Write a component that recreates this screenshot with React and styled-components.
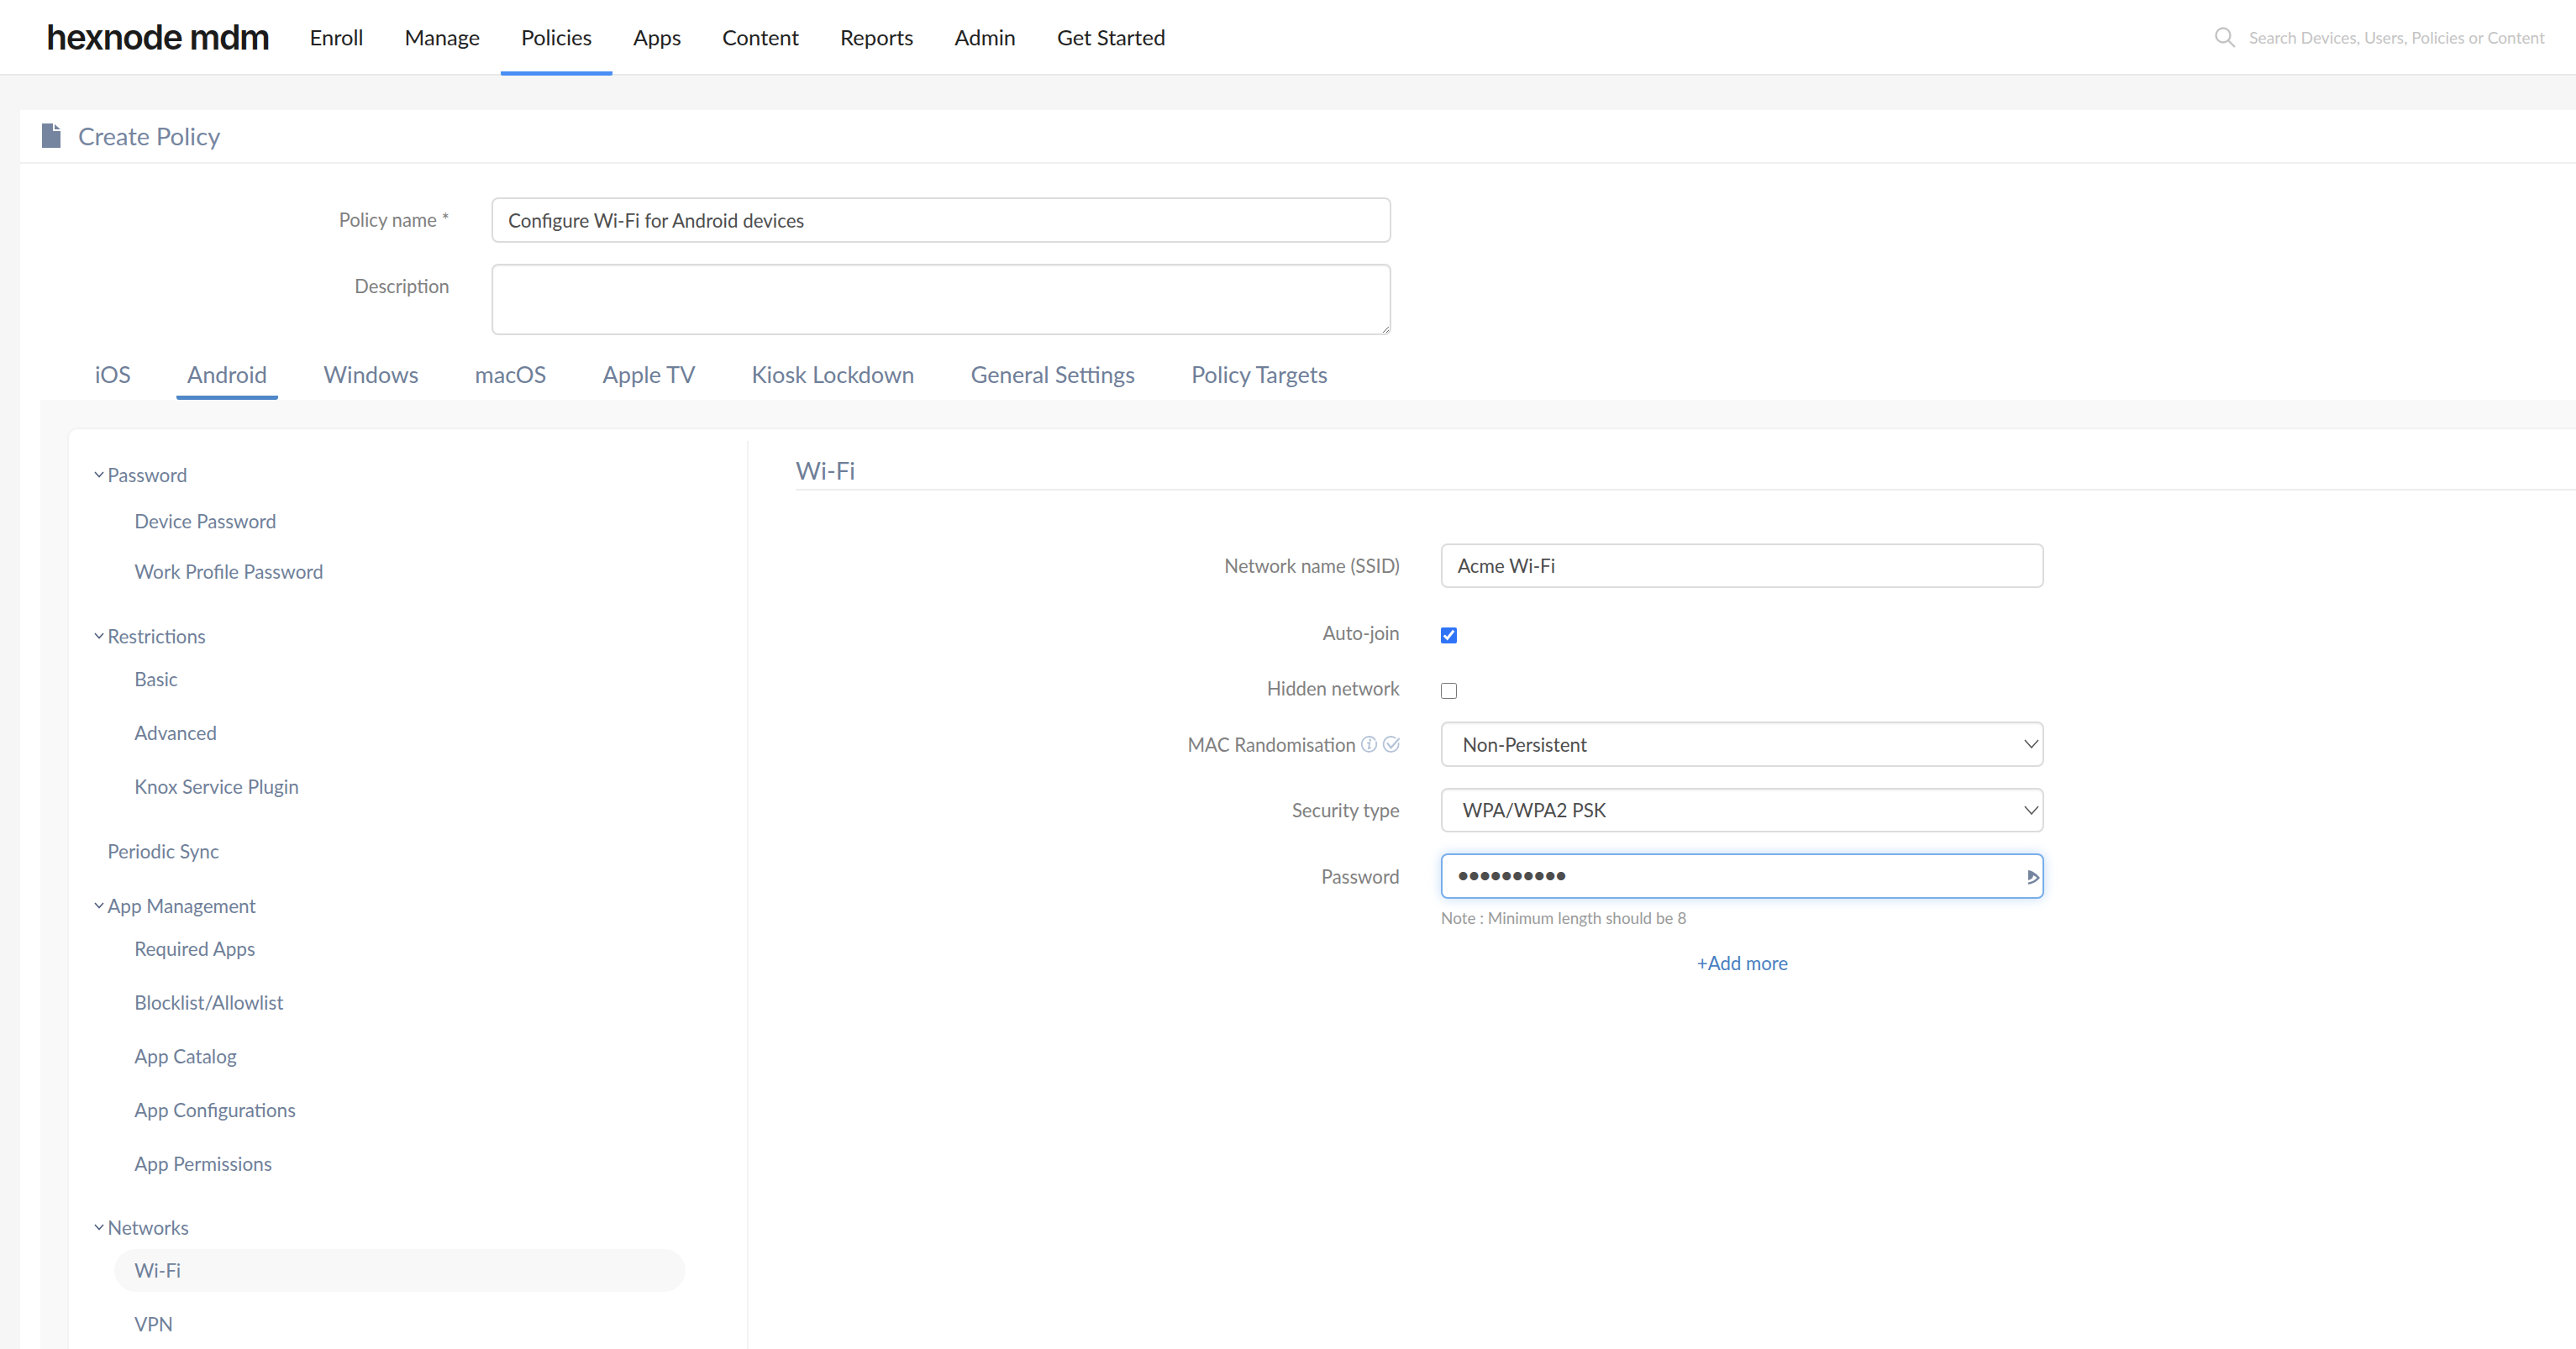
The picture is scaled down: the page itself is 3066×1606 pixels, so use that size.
import React from "react";
import styled, { createGlobalStyle } from "styled-components";

const Global = createGlobalStyle`
  html, body { margin: 0; padding: 0; background: #f6f6f6; }
  body { width: 3066px; height: 1606px; overflow: hidden; font-family: Lato, "Liberation Sans", sans-serif; }
  * { box-sizing: border-box; }
`;

const Page = styled.div`width: 3066px; height: 1606px; overflow: hidden; background: #f6f6f6;`;

const Header = styled.header`
  display: flex; align-items: stretch; height: 90px; background: #fff;
  border-bottom: 2px solid #e9e9e9; padding-left: 55px;
`;
const Logo = styled.div`
  font-family: Inter, sans-serif; font-weight: 600; font-size: 41px; letter-spacing: -1.45px;
  color: #1b1b1b; width: 289px; line-height: 88px; white-space: nowrap;
`;
const Nav = styled.nav`display: flex;`;
const NavLink = styled.a`
  display: flex; align-items: center; padding: 2px 24.5px 0; height: 90px;
  font-size: 25.6px; color: #222; border-bottom: 5px solid ${p => (p.$active ? "#4a8ef5" : "transparent")};
  border-radius: 0 0 2px 2px;
`;
const Search = styled.div`
  margin-left: auto; display: flex; align-items: center; gap: 16px; padding-right: 37px;
  font-size: 19.15px; color: #c4c4c4;
`;

const Card = styled.main`margin: 41px 0 0 24px; background: #fff; height: 1475px;`;
const CardTitle = styled.div`
  display: flex; align-items: center; gap: 21px; height: 64px; padding: 0 0 2px 26px;
  border-bottom: 2px solid #f0f0f0; font-size: 29.3px; color: #7686a0;
`;
const PolicyForm = styled.div`display: flex; flex-direction: column; gap: 25px; padding-top: 40px;`;
const PolicyRow = styled.div`display: grid; grid-template-columns: 511px 1071px; column-gap: 50px;`;
const PolicyLabel = styled.label`
  font-size: 22.2px; color: #808080; text-align: right; padding-top: 13px; line-height: 28px;
`;
const TextInput = styled.input`
  width: 100%; height: ${p => p.$h || 53}px; padding: 0 18px; border: 2px solid #dcdcdc; border-radius: 8px;
  font: 22.4px Lato, sans-serif; color: #4d4d4d; background: #fff; outline: none;
`;
const Area = styled.textarea`
  width: 100%; height: 85px; display: block; padding: 10px 18px; border: 2px solid #dcdcdc; border-radius: 8px;
  box-shadow: inset 0 1px 2px rgba(0,0,0,.07); font: 22.4px Lato, sans-serif; outline: none; background: #fff;
`;

const Tabs = styled.div`display: flex; gap: 41px; margin: 27px 0 0 76px; height: 50px;`;
const Tab = styled.a`
  padding: 0 13px 6px; height: 50px; display: flex; align-items: center; font-size: 27.2px; color: #6f7f99;
  border-bottom: 5px solid ${p => (p.$active ? "#4f87c7" : "transparent")}; border-radius: 0 0 3px 3px;
`;

const Panel = styled.section`margin-left: 24px; background: #f9f9f9; padding: 33px 0 0 32px; height: 1130px;`;
const Inner = styled.div`
  display: flex; background: #fff; height: 1100px; border: 2px solid #f3f3f3; border-right: 0; border-radius: 12px 0 0 0;
`;
const Sidebar = styled.aside`
  width: 809px; margin-top: 14px; padding: 20px 0 0 30px; border-right: 2px solid #f3f3f3; flex: none;
  display: flex; flex-direction: column;
`;
const Group = styled.div`
  display: flex; flex-direction: column; gap: ${p => p.$gap ?? 13}px; margin-top: ${p => p.$top ?? 31}px;
  &:first-child { margin-top: 0; }
`;
const GroupHead = styled.div`
  display: flex; align-items: center; height: 40px; margin-bottom: ${p => p.$mb ?? -7}px;
  font-size: 22.6px; color: #6f7f99; padding-left: ${p => (p.$plain ? 16 : 0)}px; gap: 4px;
`;
const SideItem = styled.a`
  display: flex; align-items: center; height: 51px; width: 680px; margin-left: 24px; padding-left: 24px;
  border-radius: 26px; font-size: 22.6px; color: #6f7f99; background: ${p => (p.$active ? "#f8f8f8" : "transparent")};
`;

const Content = styled.div`flex: 1; padding: 31px 0 0 56px;`;
const WifiTitle = styled.h2`
  margin: 0; padding-bottom: 5px; font-weight: 400; font-size: 29px; line-height: 35px; color: #6f7f99;
  border-bottom: 2px solid #eeeeee;
`;
const Form = styled.div`display: flex; flex-direction: column; padding-top: 63px;`;
const Row = styled.div`
  display: grid; grid-template-columns: 719px 718px; column-gap: 49px; align-items: center;
  margin-top: ${p => p.$top || 0}px; height: ${p => p.$h || 53}px;
`;
const Label = styled.label`
  display: flex; justify-content: flex-end; align-items: center; gap: 6px; font-size: 22.2px; color: #808080;
`;
const Check = styled.input`
  width: 19px; height: 19px; margin: 6px 0 0; accent-color: #2f74f6; display: block;
`;
const SelectWrap = styled.div`position: relative; height: 100%;`;
const Select = styled.select`
  appearance: none; width: 100%; height: 100%; padding: 0 40px 0 24px; border: 2px solid #dcdcdc; border-radius: 8px;
  box-shadow: inset 0 2px 2px rgba(0,0,0,.04); font: 22.4px Lato, sans-serif; color: #4d4d4d; background: #fff; outline: none;
`;
const Chevron = styled.svg`position: absolute; right: 6px; top: 21px; width: 18px; height: 11px;`;
const PwdWrap = styled.div`position: relative; height: 100%;`;
const PwdInput = styled(TextInput)`
  height: 54px; padding-left: 18px; border-color: #78aeea; box-shadow: 0 0 14px rgba(102,168,238,.4);
  font-size: 37px; font-family: "Liberation Sans", sans-serif;
`;
const Eye = styled.svg`position: absolute; right: 5px; top: 20px; width: 14px; height: 18px;`;
const Note = styled.div`grid-column: 2; font-size: 18.9px; color: #9a9a9a;`;
const AddMore = styled.a`grid-column: 2; text-align: center; font-size: 22.2px; color: #4a7fc1;`;

const Head = ({ children, mb, plain }) => (
  <GroupHead $mb={mb} $plain={plain}>
    {!plain && (
      <svg width="12" height="8" viewBox="0 0 12 8" fill="none" stroke="#4f5f7c" strokeWidth="1.6"><path d="M1 1l5 5.5L11 1" /></svg>
    )}
    {children}
  </GroupHead>
);

export default function App() {
  return (
    <Page>
      <Global />
      <Header>
        <Logo>hexnode mdm</Logo>
        <Nav>
          {["Enroll", "Manage", "Policies", "Apps", "Content", "Reports", "Admin", "Get Started"].map(t => (
            <NavLink key={t} $active={t === "Policies"}>{t}</NavLink>
          ))}
        </Nav>
        <Search>
          <svg width="25" height="25" viewBox="0 0 25 25" fill="none" stroke="#c4c4c4" strokeWidth="2.4">
            <circle cx="10" cy="10" r="8.5" /><path d="M16 16l8 8" />
          </svg>
          Search Devices, Users, Policies or Content
        </Search>
      </Header>
      <Card>
        <CardTitle>
          <svg width="22" height="29" viewBox="0 0 22 29" fill="#76859f">
            <path d="M0 0h13v9h9v20H0z" /><path d="M15 1l7 6h-7z" />
          </svg>
          Create Policy
        </CardTitle>
        <PolicyForm>
          <PolicyRow>
            <PolicyLabel>Policy name *</PolicyLabel>
            <TextInput $h={54} readOnly value="Configure Wi-Fi for Android devices" />
          </PolicyRow>
          <PolicyRow>
            <PolicyLabel>Description</PolicyLabel>
            <Area readOnly />
          </PolicyRow>
        </PolicyForm>
        <Tabs>
          {["iOS", "Android", "Windows", "macOS", "Apple TV", "Kiosk Lockdown", "General Settings", "Policy Targets"].map(t => (
            <Tab key={t} $active={t === "Android"}>{t}</Tab>
          ))}
        </Tabs>
        <Panel>
          <Inner>
            <Sidebar>
              <Group $gap={9}>
                <Head mb={1}>Password</Head>
                <SideItem>Device Password</SideItem>
                <SideItem>Work Profile Password</SideItem>
              </Group>
              <Group>
                <Head>Restrictions</Head>
                <SideItem>Basic</SideItem>
                <SideItem>Advanced</SideItem>
                <SideItem>Knox Service Plugin</SideItem>
              </Group>
              <Group><Head plain mb={0}>Periodic Sync</Head></Group>
              <Group $top={25}>
                <Head>App Management</Head>
                <SideItem>Required Apps</SideItem>
                <SideItem>Blocklist/Allowlist</SideItem>
                <SideItem>App Catalog</SideItem>
                <SideItem>App Configurations</SideItem>
                <SideItem>App Permissions</SideItem>
              </Group>
              <Group $top={30}>
                <Head>Networks</Head>
                <SideItem $active>Wi-Fi</SideItem>
                <SideItem>VPN</SideItem>
              </Group>
            </Sidebar>
            <Content>
              <WifiTitle>Wi-Fi</WifiTitle>
              <Form>
                <Row>
                  <Label>Network name (SSID)</Label>
                  <TextInput readOnly value="Acme Wi-Fi" />
                </Row>
                <Row $top={38} $h={30}>
                  <Label>Auto-join</Label>
                  <Check type="checkbox" defaultChecked />
                </Row>
                <Row $top={36} $h={30}>
                  <Label>Hidden network</Label>
                  <Check type="checkbox" />
                </Row>
                <Row $top={25} $h={54}>
                  <Label>
                    MAC Randomisation
                    <svg width="46" height="20" viewBox="0 0 46 20" fill="none" stroke="#b4c3d8" strokeWidth="1.8" strokeLinecap="round">
                      <ellipse cx="9.500" cy="10" rx="8.800" ry="9" strokeDasharray="50 3" />
                      <path d="M10.800 4.600v.8" strokeWidth="2.400" />
                      <path d="M8 8.500h2.300l-1.400 6.500 2.200-.8" />
                      <path d="M44.600 9a9 9 0 1 1-4-6.500" />
                      <path d="M31.500 9l4 5.200L45 3.500" strokeWidth="2.200" />
                    </svg>
                  </Label>
                  <SelectWrap>
                    <Select defaultValue="Non-Persistent"><option>Non-Persistent</option></Select>
                    <Chevron viewBox="0 0 18 11" fill="none" stroke="#5b5b5b" strokeWidth="1.6"><path d="M1 1l8 9 8-9" /></Chevron>
                  </SelectWrap>
                </Row>
                <Row $top={25}>
                  <Label>Security type</Label>
                  <SelectWrap>
                    <Select defaultValue="WPA/WPA2 PSK"><option>WPA/WPA2 PSK</option></Select>
                    <Chevron viewBox="0 0 18 11" fill="none" stroke="#5b5b5b" strokeWidth="1.6"><path d="M1 1l8 9 8-9" /></Chevron>
                  </SelectWrap>
                </Row>
                <Row $top={25} $h={54}>
                  <Label>Password</Label>
                  <PwdWrap>
                    <PwdInput type="password" readOnly value="acmewifi12" />
                    <Eye viewBox="0 0 14 18" fill="#76859f">
                      <path d="M0 0C4 0 10 4 14 9 11 13 6 16 0 17v-2.500C4 14 8 12 10.500 9 9 7.500 7 6.500 6 6 6 9 4 11 0 12z" />
                    </Eye>
                  </PwdWrap>
                </Row>
                <Row $top={8} $h={28}>
                  <Note>Note : Minimum length should be 8</Note>
                </Row>
                <Row $top={26} $h={28}>
                  <AddMore>+Add more</AddMore>
                </Row>
              </Form>
            </Content>
          </Inner>
        </Panel>
      </Card>
    </Page>
  );
}
